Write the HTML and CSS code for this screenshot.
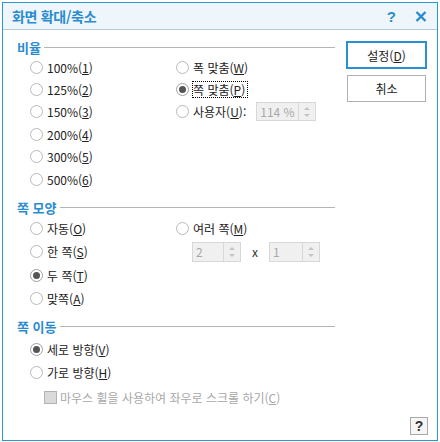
FILE: index.html
```html
<!DOCTYPE html>
<html lang="ko">
<head>
<meta charset="utf-8">
<link rel="stylesheet" href="styles.css">
</head>
<body>
<div class="dialog">
  <div class="titlebar">
    <span class="title">화면 확대/축소</span>
    <span class="tb-help">?</span>
    <svg class="tb-close" width="12" height="11" viewBox="0 0 12 11"><path d="M1.5 1 L10.5 10 M10.5 1 L1.5 10" stroke="#2a8ccf" stroke-width="2.4" fill="none"/></svg>
  </div>
  <div class="content">
    <div class="main">
      <section class="group g1">
        <div class="ghead"><span class="glabel">비율</span><i class="rule"></i></div>
        <div class="grid">
          <div class="opt"><span class="radio"></span>100%(<u>1</u>)</div>
          <div class="opt"><span class="radio"></span>폭 맞춤(<u>W</u>)</div>
          <div class="opt"><span class="radio"></span>125%(<u>2</u>)</div>
          <div class="opt"><span class="radio on"></span><span class="focus">쪽 맞춤(<u>P</u>)</span></div>
          <div class="opt"><span class="radio"></span>150%(<u>3</u>)</div>
          <div class="opt"><span class="radio"></span>사용자(<u>U</u>):<span class="spin s114"><span class="val">114 %</span><span class="arrows"><i class="up"></i><i class="dn"></i></span></span></div>
          <div class="opt"><span class="radio"></span>200%(<u>4</u>)</div>
          <div></div>
          <div class="opt"><span class="radio"></span>300%(<u>5</u>)</div>
          <div></div>
          <div class="opt"><span class="radio"></span>500%(<u>6</u>)</div>
          <div></div>
        </div>
      </section>
      <section class="group g2">
        <div class="ghead"><span class="glabel">쪽 모양</span><i class="rule"></i></div>
        <div class="grid">
          <div class="opt"><span class="radio"></span>자동(<u>O</u>)</div>
          <div class="opt"><span class="radio"></span>여러 쪽(<u>M</u>)</div>
          <div class="opt"><span class="radio"></span>한 쪽(<u>S</u>)</div>
          <div class="opt spins">
            <span class="spin s2"><span class="val">2</span><span class="arrows"><i class="up"></i><i class="dn"></i></span></span>
            <span class="times">x</span>
            <span class="spin s1"><span class="val">1</span><span class="arrows"><i class="up"></i><i class="dn"></i></span></span>
          </div>
          <div class="opt"><span class="radio on"></span>두 쪽(<u>T</u>)</div>
          <div></div>
          <div class="opt"><span class="radio"></span>맞쪽(<u>A</u>)</div>
          <div></div>
        </div>
      </section>
      <section class="group g3">
        <div class="ghead"><span class="glabel">쪽 이동</span><i class="rule"></i></div>
        <div class="list">
          <div class="opt"><span class="radio on"></span>세로 방향(<u>V</u>)</div>
          <div class="opt"><span class="radio"></span>가로 방향(<u>H</u>)</div>
          <div class="opt check disabled"><span class="cbox"></span>마우스 휠을 사용하여 좌우로 스크롤 하기(<u>C</u>)</div>
        </div>
      </section>
    </div>
    <div class="side">
      <div class="btn primary">설정(<u>D</u>)</div>
      <div class="btn">취소</div>
    </div>
  </div>
  <div class="footer">
    <span class="helpbtn">?</span>
  </div>
</div>
</body>
</html>
```

FILE: styles.css
```css
* { box-sizing: border-box; }
html, body { margin: 0; padding: 0; background: #ffffff; }
body {
  font-family: "Noto Sans CJK KR", "Noto Sans", sans-serif;
  font-size: 12px;
  color: #222222;
  width: 440px;
  height: 442px;
  overflow: hidden;
}
u { text-decoration: underline; text-underline-offset: 1px; }

.dialog {
  margin: 2px 0 0 2px;
  width: 436px;
  height: 439px;
  border: 1px solid #2d95d4;
  display: flex;
  flex-direction: column;
  background: #ffffff;
}

.titlebar {
  height: 27px;
  flex: none;
  background: #eef6fb;
  border-bottom: 1px solid #b8cad8;
  display: flex;
  align-items: center;
  padding-left: 9px;
  padding-right: 10px;
}
.title {
  font-weight: bold;
  font-size: 14px;
  color: #2a8ccf;
  flex: 1;
  letter-spacing: -0.3px;
}
.tb-help {
  font-weight: bold;
  font-size: 15px;
  color: #2a8ccf;
  font-family: "Liberation Sans", sans-serif;
  margin-right: 19px;
}
.tb-close { display: block; }

.content {
  display: flex;
  flex: none;
}
.main {
  width: 332px;
  padding-left: 14px;
  padding-top: 9px;
}
.side {
  margin-left: 11px;
  padding-top: 11px;
  width: 81px;
  display: flex;
  flex-direction: column;
  align-items: center;
}

.ghead {
  display: flex;
  align-items: center;
  height: 17px;
}
.glabel {
  font-weight: bold;
  font-size: 13px;
  color: #2a8ccf;
}
.rule {
  flex: 1;
  height: 1px;
  background: #b4b4b4;
  margin-left: 3px;
}

.grid {
  display: grid;
  grid-template-columns: 146px 1fr;
  padding-left: 13px;
}
.g1 .grid { grid-auto-rows: 22.4px; }
.g2 { margin-top: 9px; }
.g2 .grid { grid-auto-rows: 23.5px; }
.g3 { margin-top: 7.5px; }
.g3 .list { padding-left: 13px; padding-top: 3px; }
.g3 .list .opt { height: 23px; }
.g3 .list .check { margin-top: 2px; padding-left: 14px; }

.opt {
  display: flex;
  align-items: center;
  white-space: nowrap;
}
.radio {
  width: 13px;
  height: 13px;
  border-radius: 50%;
  border: 1px solid #b9b9b9;
  background: #ffffff;
  margin-right: 4px;
  flex: none;
  display: flex;
  align-items: center;
  justify-content: center;
}
.radio.on { border-color: #a0a0a0; }
.radio.on::after {
  content: "";
  width: 7px;
  height: 7px;
  border-radius: 50%;
  background: #555555;
}
.focus {
  outline: 1px dotted #000000;
  outline-offset: 0;
  padding: 0 2px 0 0;
  line-height: 15px;
}

.spin {
  display: flex;
  height: 20px;
  border: 1px solid #d8d8d8;
  background: #f0f0f0;
  color: #a9a9a9;
  flex: none;
}
.spin .val {
  flex: 1;
  padding-left: 3px;
  line-height: 18px;
}
.spin .arrows {
  width: 17px;
  border-left: 1px solid #d8d8d8;
  display: flex;
  flex-direction: column;
  align-items: center;
  justify-content: center;
  gap: 4px;
}
.arrows i {
  width: 0;
  height: 0;
  border-left: 3px solid transparent;
  border-right: 3px solid transparent;
}
.arrows .up { border-bottom: 3px solid #c4c4c4; }
.arrows .dn { border-top: 3px solid #c4c4c4; }
.s114 { width: 60px; height: 19px; margin-left: 10px; }
.spins { padding-left: 16px; }
.s2 { width: 49px; }
.s1 { width: 51px; }
.times { width: 28px; text-align: center; color: #333333; }

.check.disabled { color: #a8a8a8; }
.cbox {
  width: 13px;
  height: 13px;
  background: #dadada;
  border: 1px solid #b2b2b2;
  margin-right: 3px;
  flex: none;
}

.btn {
  width: 79px;
  height: 27px;
  border: 1px solid #b0b0b0;
  display: flex;
  align-items: center;
  justify-content: center;
  margin-top: 6px;
  color: #222222;
}
.btn.primary {
  width: 81px;
  height: 28px;
  border: 2px solid #2a90d2;
  margin-top: 0;
}

.footer {
  margin-top: auto;
  display: flex;
  justify-content: flex-end;
  padding: 0 9px 5px 0;
}
.helpbtn {
  width: 18px;
  height: 18px;
  border: 1px solid #a9a9a9;
  background: #f6f6f6;
  display: flex;
  align-items: center;
  justify-content: center;
  font-family: "Liberation Sans", sans-serif;
  font-weight: bold;
  font-size: 14px;
  color: #333333;
}
```
